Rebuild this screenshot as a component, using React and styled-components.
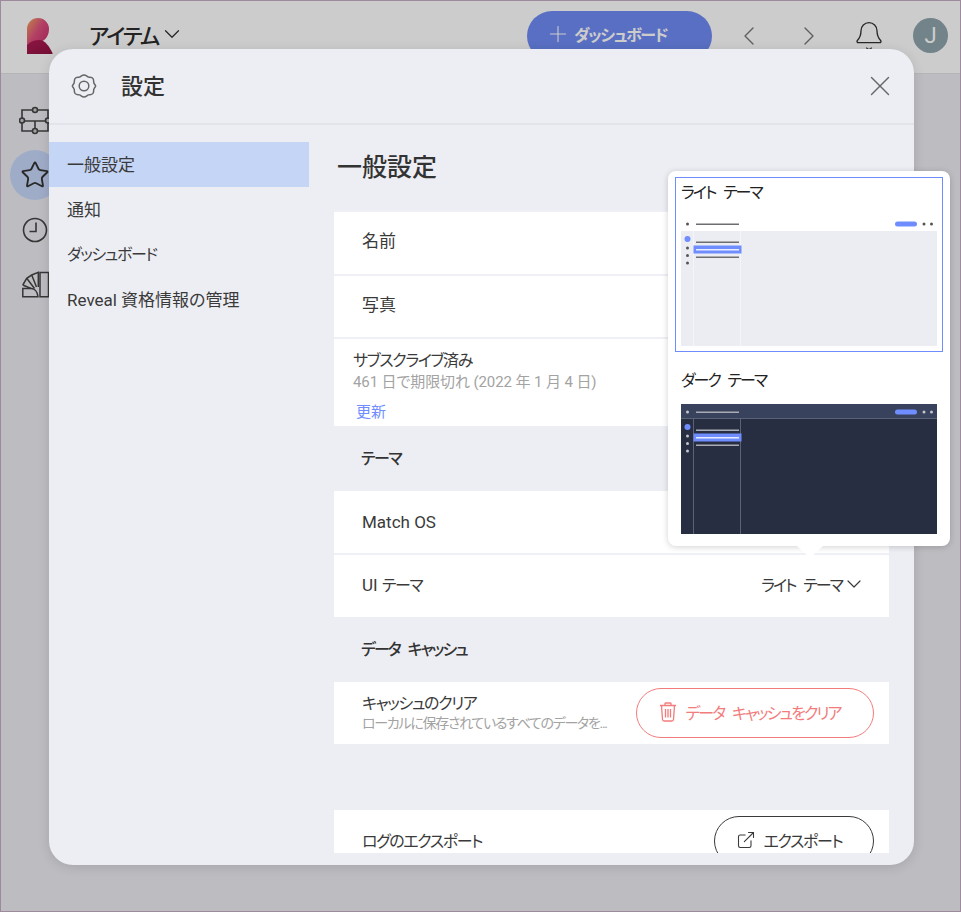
import React from "react";
import styled, { createGlobalStyle } from "styled-components";
import { Star, Bell, ChevronLeft, ChevronRight, ChevronDown, Plus, X, ExternalLink } from "lucide-react";

const GlobalStyle = createGlobalStyle`
  html, body {
    margin: 0;
    padding: 0;
    background: #ebecf2;
  }
  * {
    box-sizing: border-box;
  }
  body {
    font-family: Roboto, "Noto Sans CJK JP", sans-serif;
    font-feature-settings: "palt";
    color: #333;
  }
`;

const Page = styled.div`
  position: relative;
  width: 961px;
  height: 912px;
  overflow: hidden;
  background: #ebecf2;
`;

// the reference's kana are condensed, this gets the same run widths
const Kana = styled.span`
  font-size: 0.94em;
  letter-spacing: ${p => (p.$spaced ? "-0.12em" : "-0.085em")};
  word-spacing: ${p => (p.$spaced ? "0.35em" : "0")};
`;

const TopBar = styled.header`
  display: flex;
  align-items: center;
  height: 74px;
  padding: 0 13px 2px 27px;
  background: #fff;
  border-bottom: 1px solid #e2e3e8;
`;

const Title = styled.div`
  display: flex;
  align-items: center;
  margin-left: 36px;
  padding-bottom: 3px;
  font-size: 23px;
  font-weight: 500;
  color: #2c2c2c;
`;

const NewButton = styled.div`
  display: flex;
  align-items: center;
  gap: 3px;
  width: 185px;
  height: 50px;
  margin-left: auto;
  padding: 0 0 3px 18px;
  border-radius: 25px;
  background: #6f8bf4;
  color: #fff;
  font-size: 17px;
  font-weight: 700;
`;

const TopIcons = styled.div`
  display: flex;
  align-items: center;
  margin-left: 21px;
  gap: 28px;
  color: #555;
`;

const Avatar = styled.div`
  display: flex;
  align-items: center;
  justify-content: center;
  width: 35px;
  height: 35px;
  border-radius: 50%;
  background: #8fa4ac;
  color: #fff;
  font-size: 22px;
`;

const SideBar = styled.nav`
  display: flex;
  flex-direction: column;
  align-items: center;
  gap: 5px;
  width: 70px;
  padding-top: 21px;
`;

const SideItem = styled.div`
  display: flex;
  align-items: center;
  justify-content: center;
  width: 50px;
  height: 50px;
  border-radius: 50%;
  background: ${p => (p.$active ? "#c7d8fb" : "transparent")};
  color: #333;
`;

const Backdrop = styled.div`
  position: absolute;
  inset: 0;
  background: rgba(0, 0, 0, 0.2);
  border: 1px solid #9d8a9d;
`;

const Modal = styled.section`
  position: absolute;
  left: 49px;
  top: 49px;
  display: flex;
  flex-direction: column;
  width: 865px;
  height: 816px;
  border-radius: 24px;
  background: #edeef4;
  overflow: hidden;
  box-shadow: 0 2px 12px rgba(0, 0, 0, 0.12);
`;

const ModalHeader = styled.div`
  display: flex;
  align-items: center;
  flex: none;
  height: 76px;
  padding: 0 17px 1px 22px;
  border-bottom: 2px solid #e3e4e9;
  color: #666;
`;

const ModalTitle = styled.h2`
  flex: 1;
  margin: -3px 0 0 24px;
  font-size: 22px;
  font-weight: 500;
  color: #333;
`;

const ModalBody = styled.div`
  display: flex;
  flex: 1;
  min-height: 0;
  padding-bottom: 12px;
`;

const Menu = styled.ul`
  flex: none;
  width: 260px;
  margin: 0;
  padding: 17px 0 0;
  list-style: none;
`;

const MenuItem = styled.li`
  display: flex;
  align-items: center;
  height: 45px;
  padding: 0 0 3px 18px;
  font-size: 17px;
  color: #3a3a3a;
  background: ${p => (p.$active ? "#c5d5f5" : "transparent")};
`;

const Content = styled.div`
  flex: none;
  width: 555px;
  margin-left: 25px;
  overflow: hidden;
`;

const ContentTitle = styled.h3`
  display: flex;
  align-items: center;
  height: 85px;
  margin: 0;
  padding: 0 0 6px 3px;
  font-size: 25px;
  font-weight: 500;
  color: #333;
`;

const Row = styled.div`
  display: flex;
  align-items: center;
  justify-content: space-between;
  height: ${p => p.$h || 62}px;
  padding: 0 15px 0 28px;
  background: #fff;
  font-size: 17px;
  color: #3a3a3a;
  margin-bottom: ${p => p.$gap || 0}px;
  border-top: ${p => (p.$top ? "2px solid #eff0f6" : "none")};
`;

const RowLabel = styled.span`
  margin-top: ${p => p.$up ?? 3}px;
`;

const Subscription = styled.div`
  height: 89px;
  padding: 9px 0 0 19px;
  background: #fff;
  border-top: 2px solid #eff0f6;
  font-size: 17px;
  line-height: 24px;
  color: #3a3a3a;
`;

const Muted = styled.div`
  font-size: 15px;
  line-height: 18px;
  letter-spacing: -0.1px;
  color: #a3a3a3;
  white-space: nowrap;
`;

const CacheNote = styled(Muted)`
  font-size: 14px;
  letter-spacing: -1.3px;
`;

const RenewLink = styled.div`
  margin: 11px 0 0 3px;
  font-size: 15px;
  line-height: 20px;
  color: #6f8dff;
`;

const SectionHead = styled.div`
  display: flex;
  align-items: center;
  height: 65px;
  padding: 0 0 3px 27px;
  font-size: 17px;
  font-weight: 500;
  color: #333;
`;

const Stack = styled.div`
  display: flex;
  flex-direction: column;
  min-width: 0;
  margin-top: -2px;
  line-height: 21px;
`;

const ThemeSelect = styled.div`
  display: flex;
  align-items: center;
  margin: -5px 8px 0 0;
`;

const PillButton = styled.div`
  display: flex;
  align-items: center;
  justify-content: center;
  flex: none;
  gap: 8px;
  width: ${p => p.$w}px;
  height: 50px;
  padding: 0 10px 2px 0;
  border-radius: 25px;
  border: 1px solid ${p => p.$color};
  color: ${p => p.$color};
  font-size: 17px;
`;

const Popover = styled.div`
  position: absolute;
  left: 668px;
  top: 171px;
  display: flex;
  flex-direction: column;
  gap: 13px;
  width: 282px;
  height: 375px;
  padding: 6px 7px;
  border-radius: 8px;
  background: #fff;
  box-shadow: 0 1px 6px rgba(0, 0, 0, 0.18);

  &::after {
    content: "";
    position: absolute;
    left: 129px;
    bottom: -12px;
    width: 0;
    height: 0;
    border-left: 13px solid transparent;
    border-right: 13px solid transparent;
    border-top: 12px solid #fff;
  }
`;

const ThemeCard = styled.div`
  display: flex;
  flex-direction: column;
  justify-content: space-between;
  height: 175px;
  padding: 0 5px 5px;
  border: 1px solid ${p => (p.$selected ? "#6f8dff" : "transparent")};
  font-size: 17px;
  line-height: 30px;
  color: #222;
`;

function Logo() {
  return (
    <svg width="26" height="36" viewBox="0 0 26 36">
      <defs>
        <linearGradient id="logoTop" x1="0" y1="0" x2="1" y2="0.8">
          <stop offset="0" stopColor="#f2a65a" />
          <stop offset="0.5" stopColor="#e0527e" />
          <stop offset="1" stopColor="#c9306f" />
        </linearGradient>
        <linearGradient id="logoBottom" x1="0" y1="0" x2="1" y2="1">
          <stop offset="0" stopColor="#b01c54" />
          <stop offset="1" stopColor="#8e1240" />
        </linearGradient>
      </defs>
      <path d="M0 28 V11 A11 11 0 0 1 22 11 C22 16 20 21 14 24 L4 25 Z" fill="url(#logoTop)" />
      <path d="M0 36 V27 C4 23 8 22 12 22 C18 22 22 28 25.5 35 V36 Z" fill="url(#logoBottom)" />
    </svg>
  );
}

function BoardIcon() {
  return (
    <svg width="32" height="30" viewBox="0 0 32 30" fill="none" stroke="#444" strokeWidth="1.6">
      <path d="M3 5 H29 V26 H3 Z M3 16 H29 M16 16 V26" />
      <g fill="#ccc">
        <circle cx="16" cy="5" r="2.5" />
        <circle cx="3" cy="15.5" r="2.5" />
        <circle cx="29" cy="15.5" r="2.5" />
        <circle cx="16" cy="26" r="2.5" />
      </g>
    </svg>
  );
}

function ClockIcon() {
  return (
    <svg width="26" height="26" viewBox="0 0 26 26" fill="none" stroke="#444" strokeWidth="1.6">
      <circle cx="13" cy="13" r="11.5" />
      <path d="M14 5.500 V14.500 H7.500" />
    </svg>
  );
}

function GalleryIcon() {
  return (
    <svg width="30" height="28" viewBox="0 0 30 28" fill="none" stroke="#444" strokeWidth="1.5">
      <path d="M20 1.500 H28.500 V25.700 H20 Z" />
      <path d="M2.800 25.700 V17.500 H11 C14.500 17.500 17.500 20.500 18 25.700 Z" />
      <path d="M2.800 14 L6.700 7.300 L11.700 4 L18.300 1.300 V16" />
      <path d="M2.800 14 L11 17.500 M6.700 7.300 L14.500 17.500 M11.700 4 L16.500 16" />
    </svg>
  );
}

function GearIcon() {
  return (
    <svg width="26" height="26" viewBox="0 0 26 26" fill="none" stroke="#666" strokeWidth="1.5">
      <path d="M13 2 C15 2 16 3.6 17.5 4.1 C19 4.6 20.8 4 22 5.6 C23 7 22.400 8.600 22.900 10 C23.300 11.300 24.600 11.800 24.600 13 C24.600 14.200 23.300 14.700 22.900 16 C22.400 17.400 23 19 22 20.400 C20.800 22 19 21.400 17.500 21.900 C16 22.400 15 24 13 24 C11 24 10 22.400 8.500 21.900 C7 21.400 5.200 22 4 20.400 C3 19 3.600 17.400 3.100 16 C2.700 14.700 1.400 14.200 1.400 13 C1.400 11.800 2.700 11.300 3.100 10 C3.600 8.600 3 7 4 5.600 C5.200 4 7 4.600 8.500 4.100 C10 3.600 11 2 13 2 Z" />
      <circle cx="13" cy="13" r="4.800" />
    </svg>
  );
}

function TrashIcon() {
  return (
    <svg width="18" height="20" viewBox="0 0 18 20" fill="none" stroke="#f27c7c" strokeWidth="1.3">
      <path d="M1 3.500 H17 M6 3.500 V1.500 C6 1 6.500 1 7 1 H11 C11.500 1 12 1 12 1.500 V3.500" />
      <path d="M2.500 3.500 L3.500 17.500 C3.600 18.500 4 19 5 19 H13 C14 19 14.400 18.500 14.500 17.500 L15.500 3.500" />
      <path d="M6.500 7 V15.500 M9 7 V15.500 M11.500 7 V15.500" />
    </svg>
  );
}

function ThemePreview({ dark }) {
  const c = dark
    ? { head: "#39425c", body: "#282e42", rule: "#5c6275", line: "#a9acb5", dot: "#c4c6cc" }
    : { head: "#ffffff", body: "#ecedf3", rule: "#f4f5f8", line: "#6e6e6e", dot: "#555555" };
  return (
    <svg width="256" height="130" viewBox="0 0 256 130" style={{ display: "block" }}>
      <rect width="256" height="130" fill={c.body} />
      <rect width="256" height="15" fill={c.head} />
      {dark && <rect y="14" width="256" height="1" fill={c.rule} />}
      <rect x="12" y="15" width="1" height="115" fill={c.rule} />
      <rect x="59" y="15" width="1" height="115" fill={c.rule} />
      <circle cx="6.500" cy="8" r="1.500" fill={c.dot} />
      <rect x="15" y="7.500" width="43" height="1.500" fill={c.line} />
      <rect x="214" y="5.500" width="22" height="5" rx="2.500" fill="#6f8dff" />
      <circle cx="243" cy="8" r="1.500" fill={c.dot} />
      <circle cx="250.500" cy="8" r="1.500" fill={c.dot} />
      <circle cx="6.500" cy="23" r="3" fill="#6f8dff" />
      <circle cx="6.500" cy="32" r="1.500" fill={c.dot} />
      <circle cx="6.500" cy="39.500" r="1.500" fill={c.dot} />
      <circle cx="6.500" cy="47" r="1.500" fill={c.dot} />
      <rect x="15" y="25.500" width="43" height="1.500" fill={c.line} />
      <rect x="12.500" y="29.500" width="48" height="8" fill="#6f8dff" />
      <rect x="15" y="33" width="43" height="1.500" fill="#e8ecff" />
      <rect x="15" y="40.500" width="43" height="1.500" fill={c.line} />
    </svg>
  );
}

export default function App() {
  return (
    <Page>
      <GlobalStyle />
      <TopBar>
        <Logo />
        <Title>
          <Kana>アイテム</Kana>
          <ChevronDown size={26} strokeWidth={1.1} />
        </Title>
        <NewButton>
          <Plus size={26} strokeWidth={1} />
          <Kana>ダッシュボード</Kana>
        </NewButton>
        <TopIcons>
          <ChevronLeft size={32} strokeWidth={1} color="#777" />
          <ChevronRight size={32} strokeWidth={1} color="#777" />
          <Bell size={32} strokeWidth={1} color="#333" />
          <Avatar>J</Avatar>
        </TopIcons>
      </TopBar>
      <SideBar>
        <SideItem><BoardIcon /></SideItem>
        <SideItem $active><Star size={30} strokeWidth={1.5} /></SideItem>
        <SideItem><ClockIcon /></SideItem>
        <SideItem><GalleryIcon /></SideItem>
      </SideBar>
      <Backdrop />
      <Modal>
        <ModalHeader>
          <GearIcon />
          <ModalTitle>設定</ModalTitle>
          <X size={34} strokeWidth={1} />
        </ModalHeader>
        <ModalBody>
          <Menu>
            <MenuItem $active>一般設定</MenuItem>
            <MenuItem>通知</MenuItem>
            <MenuItem><Kana>ダッシュボード</Kana></MenuItem>
            <MenuItem>Reveal 資格情報の管理</MenuItem>
          </Menu>
          <Content>
            <ContentTitle>一般設定</ContentTitle>
            <Row $h={64} $top><RowLabel $up={-7}>名前</RowLabel></Row>
            <Row $h={63} $top><RowLabel $up={-7}>写真</RowLabel></Row>
            <Subscription>
              <Kana>サブスクライブ済み</Kana>
              <Muted>461 日で期限切れ (2022 年 1 月 4 日)</Muted>
              <RenewLink>更新</RenewLink>
            </Subscription>
            <SectionHead><Kana>テーマ</Kana></SectionHead>
            <Row><RowLabel $up={-1}>Match OS</RowLabel></Row>
            <Row $h={64} $top>
              <RowLabel $up={-5}>UI <Kana>テーマ</Kana></RowLabel>
              <ThemeSelect>
                <Kana $spaced>ライト テーマ</Kana>
                <ChevronDown size={24} strokeWidth={1.2} />
              </ThemeSelect>
            </Row>
            <SectionHead><Kana $spaced>データ キャッシュ</Kana></SectionHead>
            <Row $gap={66}>
              <Stack>
                <Kana>キャッシュのクリア</Kana>
                <CacheNote>ローカルに保存されているすべてのデータを...</CacheNote>
              </Stack>
              <PillButton $w={238} $color="#f27c7c">
                <TrashIcon />
                <Kana $spaced>データ キャッシュをクリア</Kana>
              </PillButton>
            </Row>
            <Row>
              <RowLabel $up={-3}><Kana>ログのエクスポート</Kana></RowLabel>
              <PillButton $w={160} $color="#3a3a3a">
                <ExternalLink size={20} strokeWidth={1.3} />
                <Kana>エクスポート</Kana>
              </PillButton>
            </Row>
          </Content>
        </ModalBody>
      </Modal>
      <Popover>
        <ThemeCard $selected>
          <Kana $spaced>ライト テーマ</Kana>
          <ThemePreview />
        </ThemeCard>
        <ThemeCard>
          <Kana $spaced>ダーク テーマ</Kana>
          <ThemePreview dark />
        </ThemeCard>
      </Popover>
    </Page>
  );
}
